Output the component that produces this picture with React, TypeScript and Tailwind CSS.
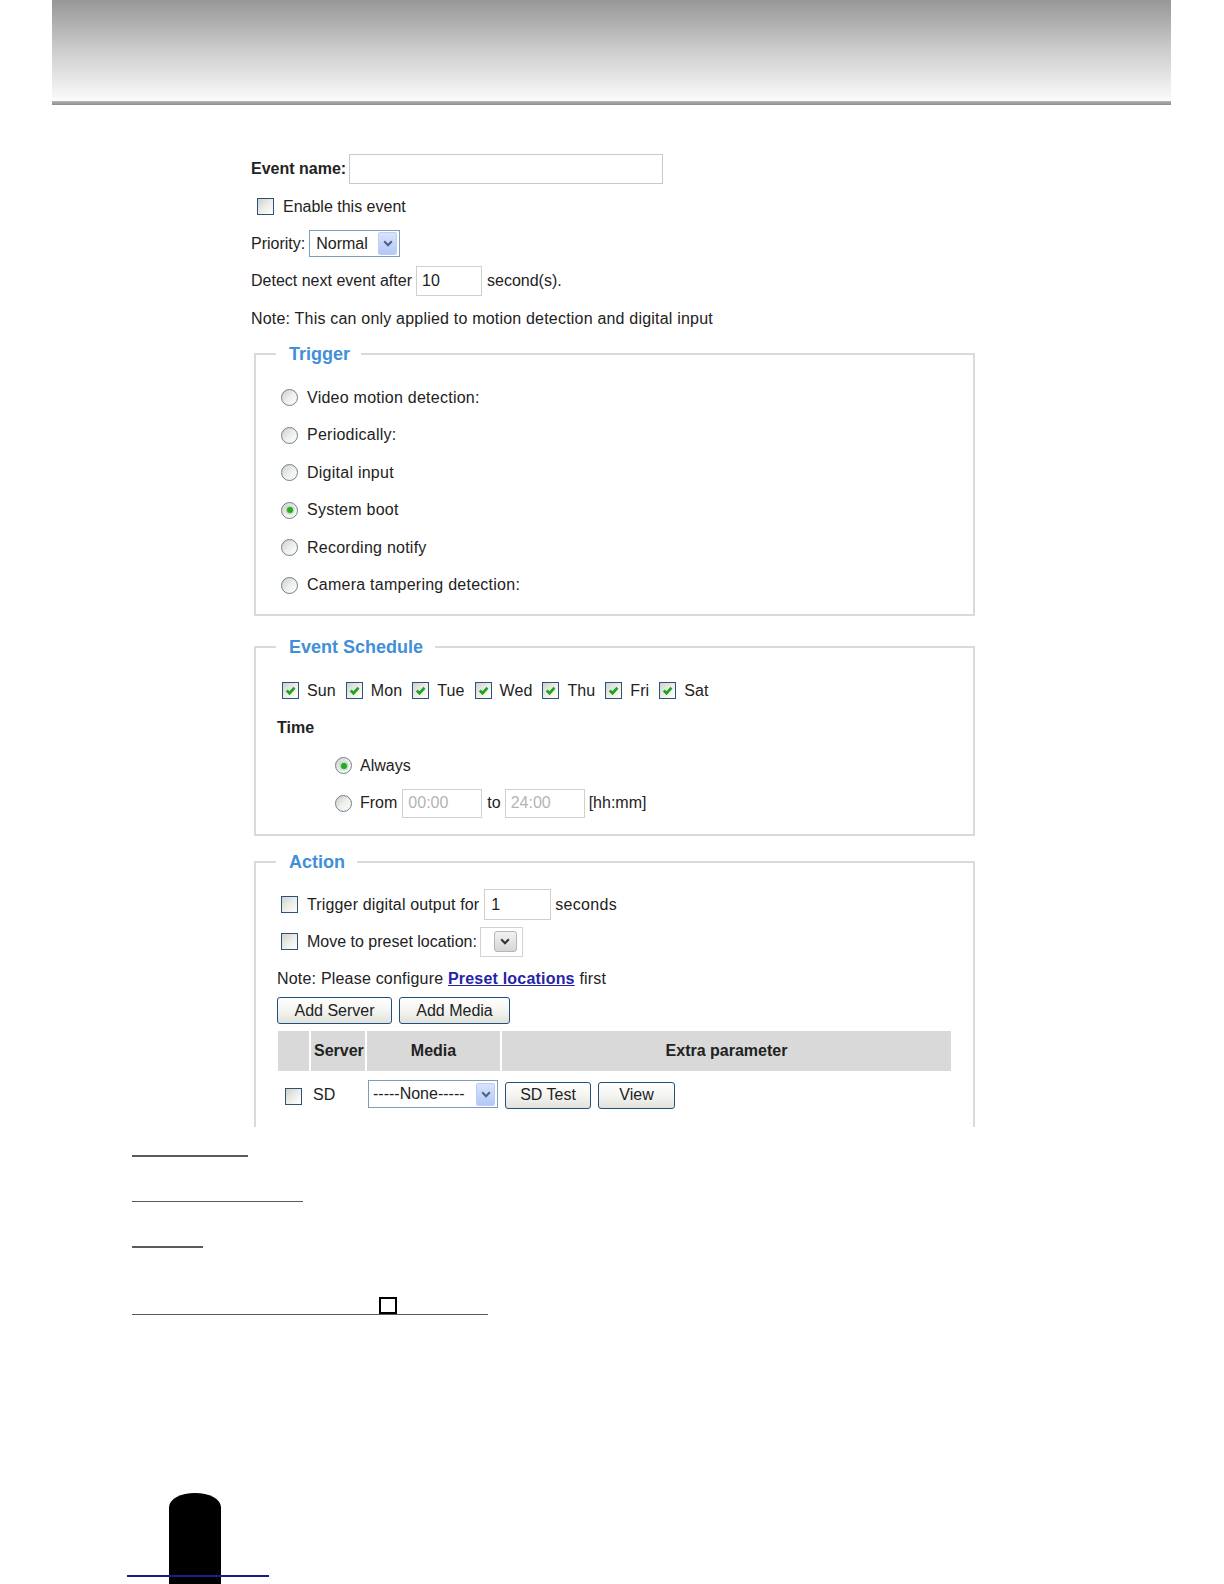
import React from "react"

function Check({ on }: { on?: boolean }) {
  return (
    <span className="flex h-[17px] w-[17px] shrink-0 items-center justify-center border border-[#2c5279] bg-gradient-to-br from-[#d2d2cc] via-[#ececE8] to-white">
      {on && (
        <svg viewBox="0 0 10 10" className="h-[11px] w-[11px]">
          <path d="M1.6 5 L4.1 7.5 L8.6 2.5" fill="none" stroke="#22a322" strokeWidth="2.4" />
        </svg>
      )}
    </span>
  )
}

function Radio({ on }: { on?: boolean }) {
  return (
    <span className="flex h-[17px] w-[17px] shrink-0 items-center justify-center rounded-full border border-[#6e8092] bg-gradient-to-br from-[#cfcfc9] via-[#eeeeea] to-white">
      {on && <span className="h-[6px] w-[6px] rounded-full bg-[#2ca52c] shadow-[0_0_2px_1px_#9ad89a]" />}
    </span>
  )
}

function DropBtn() {
  return (
    <span className="flex h-[23px] w-[19px] items-center justify-center rounded-[2px] border border-[#bccdf9] bg-gradient-to-b from-[#d9e4fd] to-[#b3c8f6]">
      <svg viewBox="0 0 10 7" className="h-[7px] w-[10px]">
        <path d="M1.2 1.2 L5 5.2 L8.8 1.2" fill="none" stroke="#4d6185" strokeWidth="2" />
      </svg>
    </span>
  )
}

function Btn({ w, children }: { w: string; children: React.ReactNode }) {
  return (
    <button
      className={`flex h-[27px] ${w} items-center justify-center rounded-[3px] border border-[#22507d] bg-gradient-to-b from-white via-[#f4f4f1] to-[#e2e2dc] text-[16px] text-[#222]`}
    >
      {children}
    </button>
  )
}

function Legend({ children, pr }: { children: React.ReactNode; pr: string }) {
  return (
    <legend className={`ml-[20px] pl-[13px] ${pr} text-[18px] font-bold leading-[22px] text-[#3f8fd9]`}>
      {children}
    </legend>
  )
}

const triggers = [
  { label: "Video motion detection:" },
  { label: "Periodically:" },
  { label: "Digital input" },
  { label: "System boot", on: true },
  { label: "Recording notify" },
  { label: "Camera tampering detection:" },
]

const days = ["Sun", "Mon", "Tue", "Wed", "Thu", "Fri", "Sat"]

export default function App() {
  return (
    <div className="flex h-[1584px] w-[1224px] flex-col overflow-hidden bg-white font-['Liberation_Sans',Arial,sans-serif] text-[16px] text-[#222]">
      {/* page header band */}
      <header className="ml-[52px] w-[1119px] shrink-0">
        <div className="h-[100px] bg-gradient-to-b from-[#979797] via-[#cdcdcd] to-[#fafafa]" />
        <div className="h-px bg-white" />
        <div className="h-[4px] bg-gradient-to-b from-[#b4b4b4] to-[#8e8e8e]" />
      </header>

      <main className="ml-[251px] mt-[45px] w-[730px] shrink-0">
        <div className="flex h-[38px] items-center">
          <span className="font-bold">Event name:</span>
          <input readOnly className="ml-[3px] h-[30px] w-[314px] border border-[#c9c9c9] bg-white" />
        </div>

        <div className="flex h-[37px] items-center pl-[6px]">
          <Check />
          <span className="ml-[9px]">Enable this event</span>
        </div>

        <div className="flex h-[37px] items-center">
          <span>Priority:</span>
          <div className="ml-[4px] flex h-[27px] w-[91px] items-center border border-[#7f9db9] pr-[2px]">
            <span className="pl-[6px]">Normal</span>
            <span className="ml-auto">
              <DropBtn />
            </span>
          </div>
        </div>

        <div className="flex h-[38px] items-center">
          <span>Detect next event after</span>
          <div className="ml-[4px] flex h-[30px] w-[66px] items-center border border-[#cfcfcf] pl-[5px]">10</div>
          <span className="ml-[5px]">second(s).</span>
        </div>

        <div className="flex h-[37px] items-center tracking-[0.2px]">
          Note: This can only applied to motion detection and digital input
        </div>

        {/* Trigger */}
        <fieldset className="ml-[3px] mt-[6px] w-[721px] border-2 border-[#dadada] pb-[10px] pt-[14px]">
          <Legend pr="pr-[11px]">Trigger</Legend>
          <div className="pl-[25px]">
            {triggers.map(t => (
              <div key={t.label} className="flex h-[37.5px] items-center">
                <Radio on={t.on} />
                <span className="ml-[9px] tracking-[0.25px]">{t.label}</span>
              </div>
            ))}
          </div>
        </fieldset>

        {/* Event Schedule */}
        <fieldset className="ml-[3px] mt-[20px] w-[721px] border-2 border-[#dadada] pb-[13px] pt-[14px]">
          <Legend pr="pr-[12px]">Event Schedule</Legend>
          <div className="flex h-[37px] items-center pl-[26px]">
            {days.map(d => (
              <span key={d} className="mr-[10px] flex items-center">
                <Check on />
                <span className="ml-[8px] tracking-[0.1px]">{d}</span>
              </span>
            ))}
          </div>
          <div className="flex h-[37px] items-center pl-[21px] font-bold">Time</div>
          <div className="flex h-[39px] items-center pl-[79px]">
            <Radio on />
            <span className="ml-[8px]">Always</span>
          </div>
          <div className="flex h-[36px] items-center pl-[79px]">
            <Radio />
            <span className="ml-[8px]">From</span>
            <div className="ml-[5px] flex h-[29px] w-[80px] items-center border border-[#cfcfcf] pl-[5px] text-[#b4b4b4]">00:00</div>
            <span className="ml-[5px]">to</span>
            <div className="ml-[4px] flex h-[29px] w-[80px] items-center border border-[#cfcfcf] pl-[5px] text-[#b4b4b4]">24:00</div>
            <span className="ml-[4px]">[hh:mm]</span>
          </div>
        </fieldset>

        {/* Action */}
        <fieldset className="ml-[3px] mt-[15px] w-[721px] border-2 border-b-0 border-[#dadada] pb-[12px] pt-[13px]">
          <Legend pr="pr-[12px]">Action</Legend>
          <div className="flex h-[37px] items-center pl-[25px]">
            <Check />
            <span className="ml-[9px] tracking-[0.15px]">Trigger digital output for</span>
            <div className="ml-[5px] flex h-[31px] w-[67px] items-center border border-[#cfcfcf] pl-[6px]">1</div>
            <span className="ml-[4px] tracking-[0.3px]">seconds</span>
          </div>
          <div className="flex h-[37px] items-center pl-[25px]">
            <Check />
            <span className="ml-[9px]">Move to preset location:</span>
            <div className="ml-[3px] flex h-[30px] w-[43px] items-center justify-end border border-[#d2d2d2] pr-[5px]">
              <span className="flex h-[21px] w-[23px] items-center justify-center rounded-[3px] border border-[#b5b5b5] bg-gradient-to-b from-[#f2f2f2] to-[#d6d6d6]">
                <svg viewBox="0 0 10 7" className="h-[7px] w-[10px]">
                  <path d="M1.2 1.2 L5 5.2 L8.8 1.2" fill="none" stroke="#333" strokeWidth="2" />
                </svg>
              </span>
            </div>
          </div>
          <div className="flex h-[37px] items-center pl-[21px] tracking-[0.2px]">
            <span>Note: Please configure&nbsp;</span>
            <a className="font-bold text-[#2424a8] underline">Preset locations</a>
            <span>&nbsp;first</span>
          </div>
          <div className="flex gap-[7px] pl-[21px]">
            <Btn w="w-[115px]">Add Server</Btn>
            <Btn w="w-[111px]">Add Media</Btn>
          </div>

          <div className="ml-[22px] mt-[7px] grid w-[673px] grid-cols-[31px_54px_133px_449px] gap-x-[2px]">
            <div className="h-[40px] bg-[#d9d9d9]" />
            <div className="flex h-[40px] items-center bg-[#d9d9d9] pl-[3px] font-bold">Server</div>
            <div className="flex h-[40px] items-center justify-center bg-[#d9d9d9] font-bold">Media</div>
            <div className="flex h-[40px] items-center justify-center bg-[#d9d9d9] font-bold">Extra parameter</div>

            <div className="mt-[2px] flex h-[42px] items-center justify-center pt-[4px]">
              <Check />
            </div>
            <div className="mt-[2px] flex h-[42px] items-center pl-[2px] pt-[2px]">SD</div>
            <div className="mt-[2px] flex h-[42px] items-center pl-[1px]">
              <div className="flex h-[28px] w-[130px] items-center border border-[#7f9db9] pr-[2px]">
                <span className="pl-[4px]">-----None-----</span>
                <span className="ml-auto">
                  <DropBtn />
                </span>
              </div>
            </div>
            <div className="mt-[2px] flex h-[42px] items-center gap-[7px] pl-[3px] pt-[2px]">
              <Btn w="w-[86px]">SD Test</Btn>
              <Btn w="w-[77px]">View</Btn>
            </div>
          </div>
        </fieldset>
      </main>

      {/* blank rule lines */}
      <div className="ml-[132px] flex shrink-0 flex-col">
        <div className="mt-[28px] h-[1.5px] w-[116px] bg-[#5a5a5a]" />
        <div className="mt-[44px] h-[1.5px] w-[171px] bg-[#5a5a5a]" />
        <div className="mt-[44px] h-[1.5px] w-[71px] bg-[#5a5a5a]" />
        <div className="ml-[247px] mt-[49px] h-[17px] w-[18px] border-2 border-black" />
        <div className="h-[1.5px] w-[356px] bg-[#5a5a5a]" />
      </div>

      {/* page tab */}
      <div className="relative ml-[169px] mt-auto h-[91px] w-[52px] shrink-0 rounded-t-[26px_14px] bg-black">
        <div className="absolute left-[-42px] top-[82px] h-[2px] w-[142px] bg-[#1b1b8f]" />
      </div>
    </div>
  )
}
